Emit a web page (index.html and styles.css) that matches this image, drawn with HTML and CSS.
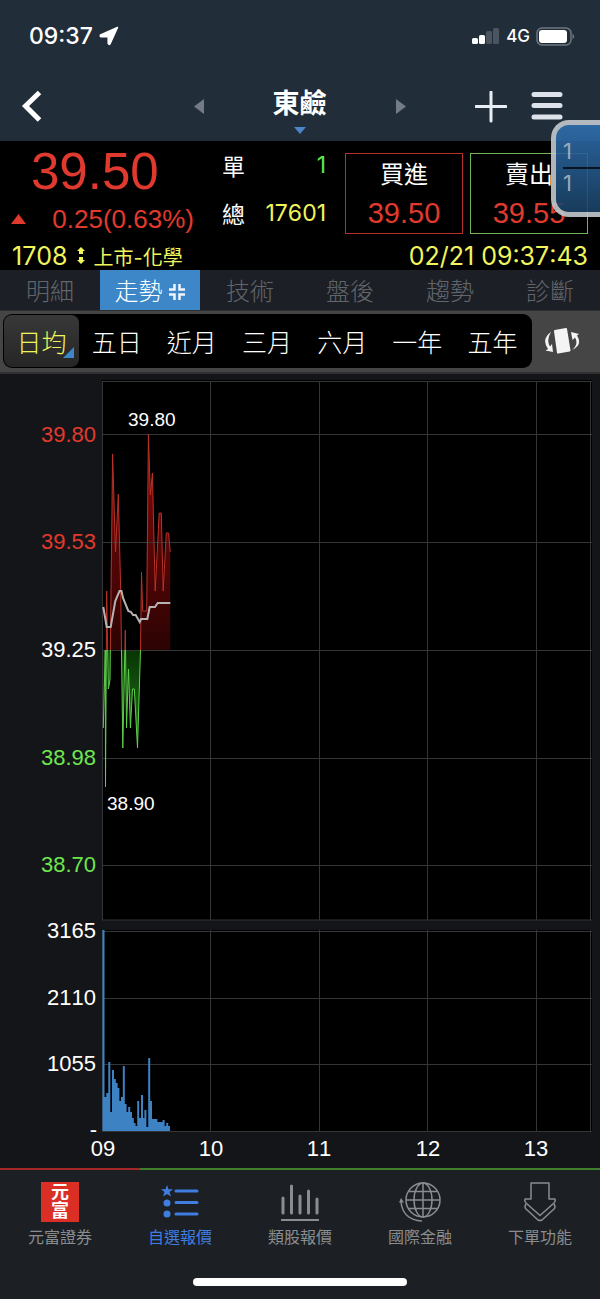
FILE: index.html
```
<!DOCTYPE html>
<html lang="zh-Hant">
  <head>
    <meta charset="UTF-8" />
    <meta name="viewport" content="width=device-width, initial-scale=1.0" />
    <title>東鹼 1708</title>
    <link rel="stylesheet" href="styles.css">
  </head>
  <body>
    <header>
      <div class="status">
        <div class="clock">
          <span>09:37</span>
          <svg width="20" height="20" viewBox="0 0 20 20"><path d="M18.500 1.500 L1.500 9 Q.8 10 2 10.800 H9.200 V17.500 Q10 19 11 18 Z" fill="#fff" stroke="#fff" stroke-width="1.500" stroke-linejoin="round"/></svg>
        </div>
        <div class="signal">
          <svg width="28" height="18" viewBox="0 0 28 18">
            <rect x="0" y="11" width="6" height="6" rx="1.500" fill="#fff"/>
            <rect x="7" y="8" width="6" height="9" rx="1.500" fill="#fff"/>
            <rect x="14" y="4" width="6" height="13" rx="1.500" fill="#4b5560"/>
            <rect x="21" y="1" width="6" height="16" rx="1.500" fill="#4b5560"/>
          </svg>
          <span>4G</span>
          <svg width="39" height="19" viewBox="0 0 39 19">
            <rect x="1" y="1" width="34" height="17" rx="5" fill="none" stroke="#6e7780" stroke-width="1.500"/>
            <rect x="3" y="3" width="28" height="13" rx="3" fill="#fff"/>
            <path d="M36.500 6.500 Q40 9.500 36.500 12.500 Z" fill="#6e7780"/>
          </svg>
        </div>
      </div>
      <div class="navbar">
        <div class="side">
          <button class="icon" aria-label="返回"><svg width="24" height="34" viewBox="0 0 24 34"><path d="M19.500 2.500 L5.500 16 L19.500 30" fill="none" stroke="#fff" stroke-width="5"/></svg></button>
        </div>
        <div class="title">
          <button class="icon" aria-label="上一檔"><svg width="10" height="16" viewBox="0 0 10 16"><path d="M10 0 V15 L0 7.500 Z" fill="#737c86"/></svg></button>
          <h1>東鹼</h1>
          <button class="icon" aria-label="下一檔"><svg width="10" height="16" viewBox="0 0 10 16"><path d="M0 0 V15 L10 7.500 Z" fill="#737c86"/></svg></button>
        </div>
        <div class="side right">
          <button class="icon" aria-label="新增"><svg width="32" height="32" viewBox="0 0 32 32"><path d="M16 1 V30 M1 15.500 H31" stroke="#e9edf3" stroke-width="3" stroke-linecap="round"/></svg></button>
          <button class="icon" aria-label="選單"><svg width="32" height="32" viewBox="0 0 32 32"><path d="M3 3.500 H29 M3 14.500 H29 M3 26 H29" stroke="#dde1ea" stroke-width="5" stroke-linecap="round"/></svg></button>
        </div>
      </div>
    </header>

    <section class="quote">
      <div class="summary">
        <div class="price">
          <strong>39.50</strong>
          <div class="change">
            <svg width="15" height="10" viewBox="0 0 15 10"><path d="M7.500 0 L15 10 H0 Z" fill="#e03a2e"/></svg>
            <span>0.25(0.63%)</span>
          </div>
        </div>
        <dl class="volume">
          <div><dt>單</dt><dd class="up">1</dd></div>
          <div><dt>總</dt><dd>17601</dd></div>
        </dl>
        <button class="trade buy"><span>買進</span><b>39.50</b></button>
        <button class="trade sell"><span>賣出</span><b>39.55</b></button>
      </div>
      <div class="info">
        <span class="code">1708</span>
        <svg width="8" height="18" viewBox="0 0 8 18"><path d="M4 0 L8 4 H6 V7 H2 V4 H0 Z M2 10 H6 V13 H8 L4 17 L0 13 H2 Z" fill="#f1f55c"/></svg>
        <span class="market">上市-化學</span>
        <time>02/21 09:37:43</time>
      </div>
      <div class="floating"><span>1</span><span>1</span></div>
    </section>

    <nav class="tabs">
      <a href="#">明細</a>
      <a href="#" class="active">走勢<svg width="18" height="18" viewBox="0 0 18 18"><path d="M6.500 1 V6.500 H1 M11.500 1 V6.500 H17 M6.500 17 V11.500 H1 M11.500 17 V11.500 H17" fill="none" stroke="#eef5fc" stroke-width="2.500"/></svg></a>
      <a href="#">技術</a>
      <a href="#">盤後</a>
      <a href="#">趨勢</a>
      <a href="#">診斷</a>
    </nav>

    <div class="ranges">
      <div class="range-list">
        <button class="selected">日均</button>
        <button>五日</button>
        <button>近月</button>
        <button>三月</button>
        <button>六月</button>
        <button>一年</button>
        <button>五年</button>
      </div>
      <button class="icon rotate" aria-label="旋轉">
        <svg width="36" height="28" viewBox="0 0 36 28">
          <path d="M11 4 L22 2 L25.500 23.500 L14 25.500 Z" fill="#f4f4f4" stroke="#f4f4f4" stroke-width="2" stroke-linejoin="round"/>
          <path d="M7 5 Q-3 12 4 22 L1.500 23.500 L9 25 L8 17 L6 19.500 Q2 13 7 5 Z" fill="#f4f4f4"/>
          <path d="M28 23 Q39 18 33 8.500 L35 7 L27 5 L28.500 13 L31 10.500 Q35 17 28 23 Z" fill="#f4f4f4"/>
        </svg>
      </button>
    </div>

    <main>
      <svg class="chart" viewBox="0 374 600 794" role="img" aria-label="走勢圖">
        <defs>
          <linearGradient id="redFill" gradientUnits="userSpaceOnUse" x1="0" y1="434" x2="0" y2="650">
            <stop offset="0" stop-color="#8a0808"/>
            <stop offset="1" stop-color="#2c0303"/>
          </linearGradient>
          <linearGradient id="greenFill" gradientUnits="userSpaceOnUse" x1="0" y1="650" x2="0" y2="788">
            <stop offset="0" stop-color="#083405"/>
            <stop offset="1" stop-color="#2c9a20"/>
          </linearGradient>
          <clipPath id="above"><rect x="102" y="380" width="489" height="270"/></clipPath>
          <clipPath id="below"><rect x="102" y="650" width="489" height="270"/></clipPath>
          <path id="trend" d="M103.300 728 L105.300 650 L105.500 787 L106.700 591 L108.300 689 L110 680 L112.600 454 L115.500 552 L118.300 494 L120.700 590 L122.800 748 L125.300 630 L126.500 728 L128.500 669 L130.400 728 L132.500 689 H134.300 L137.500 748 L140.500 650 L141.500 572 L142.700 611 H146.700 L148.400 434 L150.400 495 L152.400 473 L155.200 591 L159.200 513 H161.300 L163.200 591 L166.300 533 H168.600 L170.200 552"/>
          <path id="area" d="M103.300 650 V728 L105.300 650 L105.500 787 L106.700 591 L108.300 689 L110 680 L112.600 454 L115.500 552 L118.300 494 L120.700 590 L122.800 748 L125.300 630 L126.500 728 L128.500 669 L130.400 728 L132.500 689 H134.300 L137.500 748 L140.500 650 L141.500 572 L142.700 611 H146.700 L148.400 434 L150.400 495 L152.400 473 L155.200 591 L159.200 513 H161.300 L163.200 591 L166.300 533 H168.600 L170.200 552 V650 Z"/>
        </defs>

        <rect x="102" y="380" width="490" height="540"/>
        <rect x="102" y="930" width="490" height="201"/>

        <!-- fills under the price line -->
        <use href="#area" fill="url(#redFill)" clip-path="url(#above)"/>
        <use href="#area" fill="url(#greenFill)" clip-path="url(#below)"/>

        <path class="grid" d="M102 381.500 H592 M102 434.500 H592 M102 542.500 H592 M102 650.500 H592 M102 758.500 H592 M102 865.500 H592 M102 920 H592
          M102 931.500 H592 M102 998.500 H592 M102 1064.500 H592 M102 1131.500 H592
          M102.500 381 V920 M210.500 381 V920 M319.500 381 V920 M427.500 381 V920 M536.500 381 V920 M590.500 381 V920
          M102.500 930 V1131 M210.500 930 V1131 M319.500 930 V1131 M427.500 930 V1131 M536.500 930 V1131 M590.500 930 V1131"/>

        <use href="#trend" class="line-up" clip-path="url(#above)"/>
        <use href="#trend" class="line-down" clip-path="url(#below)"/>
        <path class="average" d="M103.300 607 L106.700 627 H110.700 L115.300 601 L119.500 591 H121.500 L123 598 L128.300 611 L131 612 L133 615 H135.700 L139.700 622 L141 619 H147.300 L149.700 607 H155 L157.700 603 H170.300"/>

        <!-- volume -->
        <path class="bars" d="M103.500 1131 V930 M105.500 1131 V1097 M107.300 1131 V1093 M109.300 1131 V1062 M111.200 1131 V1112 M113 1131 V1070 M114.800 1131 V1079 M116.600 1131 V1083 M118.400 1131 V1088 M120.200 1131 V1101 M122 1131 V1097 M123.800 1131 V1066 M125.600 1131 V1104 M127.400 1131 V1112 M129.200 1131 V1107 M131 1131 V1112 M132.800 1131 V1118 M134.600 1131 V1123 M136.400 1131 V1126 M138.200 1131 V1101 M140 1131 V1118 M142 1131 V1095 M143.800 1131 V1118 M145.400 1131 V1110 M147.200 1131 V1127 M149.200 1131 V1058 M151 1131 V1101 M152.800 1131 V1119 M154.600 1131 V1119 M156.400 1131 V1119 M158.200 1131 V1122 M160 1131 V1122 M161.800 1131 V1122 M163.600 1131 V1120 M165.400 1131 V1126 M167.200 1131 V1123 M169 1131 V1126"/>

        <g class="axis">
          <text x="96" y="442" class="red">39.80</text>
          <text x="96" y="549" class="red">39.53</text>
          <text x="96" y="657">39.25</text>
          <text x="96" y="765" class="green">38.98</text>
          <text x="96" y="872" class="green">38.70</text>
          <text x="96" y="938">3165</text>
          <text x="96" y="1005">2110</text>
          <text x="96" y="1071">1055</text>
          <text x="97" y="1137">-</text>
        </g>
        <g class="hours">
          <text x="103" y="1156">09</text>
          <text x="211" y="1156">10</text>
          <text x="319" y="1156">11</text>
          <text x="428" y="1156">12</text>
          <text x="536" y="1156">13</text>
        </g>
        <g class="marks">
          <text x="128" y="426">39.80</text>
          <text x="107" y="810">38.90</text>
        </g>
      </svg>
    </main>

    <footer>
      <nav class="menu">
        <a href="#">
          <span class="logo"><i>元</i><i>富</i></span>
          <span>元富證券</span>
        </a>
        <a href="#" class="current">
          <svg width="40" height="40" viewBox="0 0 40 40"><path d="M7 3 L8.500 7.300 H13 L9.500 10 L11 14.500 L7 12 L3 14.500 L4.500 10 L1 7.300 H5.500 Z"/><circle cx="7" cy="21" r="3.500"/><circle cx="7" cy="32" r="3.500"/><path d="M16 9 H37 M16 20.500 H37 M16 32 H37" stroke="currentColor" stroke-width="3" stroke-linecap="round"/></svg>
          <span>自選報價</span>
        </a>
        <a href="#">
          <svg width="40" height="40" viewBox="0 0 40 40"><path d="M3 16 V31 M11.500 4 V31 M20 14 V31 M28.500 9 V31 M37 17 V31" stroke="currentColor" stroke-width="3" stroke-linecap="round"/><path d="M1 38 H39" stroke="currentColor" stroke-width="2"/></svg>
          <span>類股報價</span>
        </a>
        <a href="#">
          <svg width="42" height="40" viewBox="0 0 42 40"><g fill="none" stroke="currentColor" stroke-width="1.500"><circle cx="24" cy="18" r="17"/><ellipse cx="24" cy="18" rx="9" ry="17"/><path d="M24 1 V35 M7 18 H41 M10 9.500 H38 M10 26.500 H38 M2 20 Q4 38 23 39"/></g><path d="M2 16 L5 20.500 H0 Z"/></svg>
          <span>國際金融</span>
        </a>
        <a href="#">
          <svg width="40" height="40" viewBox="0 0 40 40"><g fill="none" stroke="currentColor" stroke-width="1.500" stroke-linejoin="round"><path d="M11 1 H29 V17 H35 Q36 19 34 21 L20 33.500 L6 21 Q4 19 5 17 H11 Z"/><path d="M6 22 Q4 25 6 27 L18 38 Q20 39 22 38 L34 27 Q36 25 34 22"/></g></svg>
          <span>下單功能</span>
        </a>
      </nav>
      <div class="home-bar"></div>
    </footer>
  </body>
</html>
```
FILE: styles.css
```
* {
  margin: 0;
  padding: 0;
  box-sizing: border-box;
}
body {
  min-height: 100vh;
  display: flex;
  flex-direction: column;
  overflow-x: hidden;
  background: #141518;
  color: #fff;
  font-family: "Liberation Sans", "Noto Sans CJK TC", sans-serif;
  font-kerning: none;
}
button {
  background: none;
  border: none;
  color: inherit;
  font: inherit;
  cursor: pointer;
}
a {
  color: inherit;
  text-decoration: none;
}
svg {
  display: block;
  flex-shrink: 0;
}
header {
  height: 141px;
  background: #212d39;
}
.status {
  height: 72px;
  padding: 0 25px 0 29px;
  display: flex;
  justify-content: space-between;
  align-items: center;
  font-family: Inter, sans-serif;
  font-weight: 500;
}
.clock,
.signal {
  display: flex;
  align-items: center;
  gap: 6px;
}
.clock {
  font-size: 23px;
}
.signal {
  font-size: 17px;
}
.navbar {
  height: 69px;
  padding: 0 37px 0 20px;
  display: grid;
  grid-template-columns: 1fr 212px 1fr;
  align-items: center;
}
.icon {
  display: flex;
}
.side {
  display: flex;
}
.navbar .side {
  margin-right: -17px;
}
.navbar .right {
  justify-content: flex-end;
  gap: 24px;
  margin-right: 0;
}
.title {
  display: flex;
  justify-content: space-between;
  align-items: center;
}
.navbar .title {
  margin: 0 -8px 0 8px;
}
.title h1 {
  position: relative;
  font-size: 27px;
  line-height: 40px;
  font-weight: 700;
  padding-bottom: 6px;
}
.title h1::after {
  content: "";
  position: absolute;
  left: 50%;
  bottom: -4px;
  margin-left: -6px;
  border: 6px solid transparent;
  border-top: 7px solid #4b86c8;
  border-bottom: none;
}

.quote {
  position: relative;
  height: 129px;
  background: #000;
}
.summary {
  display: grid;
  grid-template-columns: 204px 1fr 118px 118px;
  column-gap: 7px;
  height: 101px;
  padding: 0 12px 0 11px;
}
.price {
  color: #e03a2e;
}
.price strong {
  display: block;
  font-size: 51px;
  line-height: 62px;
  font-weight: 400;
  padding-left: 20px;
}
.change {
  display: flex;
  justify-content: space-between;
  align-items: center;
  font-size: 26px;
  line-height: 32px;
  padding-right: 21px;
}
.volume {
  margin-right: 12px;
}
.volume div {
  display: flex;
  justify-content: space-between;
  align-items: center;
  height: 48px;
  font-size: 23px;
}
.volume dd {
  font-family: Inter, sans-serif;
  color: #f1f55c;
}
.volume .up {
  color: #5fe84b;
}
.trade {
  height: 81px;
  margin-top: 12px;
  border: 1px solid #b8302b;
  display: flex;
  flex-direction: column;
  align-items: center;
  justify-content: center;
}
.trade span {
  font-size: 24px;
  line-height: 38px;
}
.trade b {
  font-size: 29px;
  line-height: 38px;
  font-weight: 400;
  color: #e03a2e;
}
.sell {
  border-color: #6fb558;
}
.info {
  height: 28px;
  padding: 0 12px;
  display: flex;
  align-items: center;
  gap: 9px;
  color: #f1f55c;
  font-family: Inter, "Noto Sans CJK TC", sans-serif;
  font-size: 25px;
}
.market {
  font-size: 20px;
}
.info time {
  margin-left: auto;
}
/* half hidden order counter at the screen edge */
.floating {
  position: absolute;
  right: 0;
  top: -21px;
  width: 49px;
  height: 97px;
  padding: 10px 0 0 7px;
  border: 5px solid #c3c9ce;
  border-right: none;
  border-radius: 18px 0 0 18px;
  background: linear-gradient(#2f6fb0, #1b4265);
  color: #a9bccd;
  font-size: 22px;
  opacity: 0.9;
}
.floating span {
  display: block;
  line-height: 32px;
  font-family: Inter, sans-serif;
}
.floating span + span {
  border-top: 2px solid #0c1622;
  line-height: 28px;
}

.tabs {
  display: flex;
  height: 41px;
  background: #1c2026;
  border-bottom: 1px solid #2c2e31;
  color: #62666c;
  font-size: 24px;
  font-weight: 300;
  line-height: 40px;
}
.tabs a {
  flex: 1;
  padding-top: 3px;
  display: flex;
  justify-content: center;
  align-items: center;
  gap: 5px;
}
.tabs .active {
  background: #3d87c9;
  color: #fff;
}
.ranges {
  height: 63px;
  padding: 3px 3px 5px;
  display: flex;
  align-items: center;
  background: #454545;
  border-bottom: 2px solid #303032;
}
.range-list {
  flex: 1;
  height: 54px;
  display: flex;
  background: #000;
  border-radius: 9px;
  padding: 1px 2px 1px 1px;
}
.range-list button {
  position: relative;
  flex: 1;
  font-size: 25px;
  font-weight: 300;
}
.range-list .selected {
  background: linear-gradient(#383838, #262626);
  border-radius: 8px;
  color: #f1f55c;
}
.selected::after {
  content: "";
  position: absolute;
  right: 5px;
  bottom: 9px;
  border-left: 11px solid transparent;
  border-bottom: 11px solid #3d87c9;
}
.rotate {
  margin: 0 17px 0 12px;
}

.chart {
  width: 100%;
  height: auto;
}
.grid {
  fill: none;
  stroke: #343537;
}
.line-up,
.line-down {
  fill: none;
  stroke: #b83228;
}
.line-down {
  stroke: #5fcf4b;
}
.average {
  fill: none;
  stroke: #b9b2b2;
  stroke-width: 2;
}
.bars {
  stroke: #3d83c4;
  stroke-width: 2;
}
.chart text {
  fill: #fff;
  font-size: 22px;
}
.axis text {
  text-anchor: end;
}
.chart .red {
  fill: #e03a2e;
}
.chart .green {
  fill: #6ee64e;
}
.hours text {
  text-anchor: middle;
}
.chart .marks text {
  font-size: 19px;
}

footer {
  flex: 1;
  background: #1c2024;
}
footer::before {
  content: "";
  display: block;
  height: 2px;
  background: linear-gradient(to right, #a32726 140px, #3f7f2b 140px);
}
.menu {
  display: flex;
  padding-top: 12px;
  color: #8a8d90;
  font-size: 16px;
  line-height: 32px;
}
.menu a {
  flex: 1;
  display: flex;
  flex-direction: column;
  align-items: center;
}
.menu svg {
  fill: currentColor;
}
.menu .current {
  color: #3f7de0;
}
.logo {
  width: 38px;
  height: 40px;
  display: flex;
  flex-direction: column;
  align-items: center;
  justify-content: center;
  background: #db2f25;
  color: #fff;
  font-size: 18px;
  font-weight: 700;
  line-height: 19px;
}
.logo i {
  font-style: normal;
}
.home-bar {
  width: 214px;
  height: 8px;
  margin: 24px auto 0;
  border-radius: 4px;
  background: #fff;
}
```
